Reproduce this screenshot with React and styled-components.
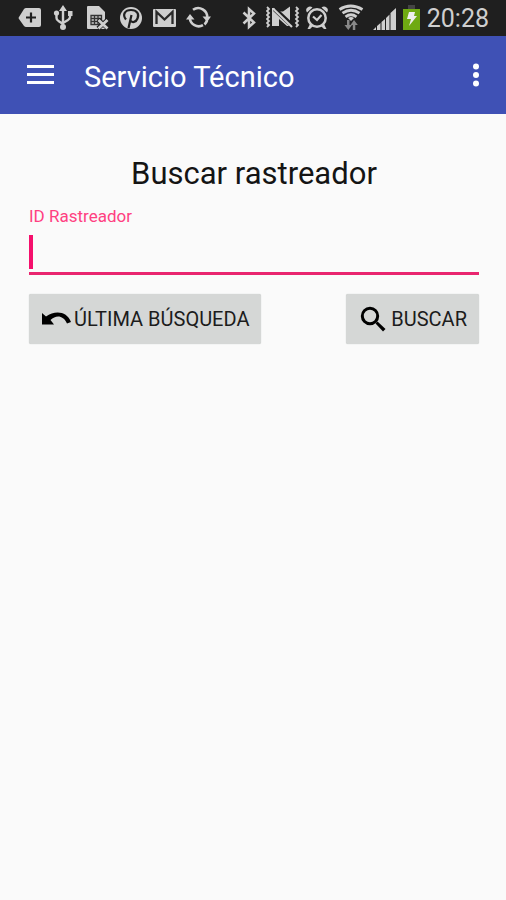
import React from "react";
import styled, { createGlobalStyle } from "styled-components";

const GlobalStyle = createGlobalStyle`
  * { box-sizing: border-box; }
  body {
    margin: 0;
    background: #fafafa;
    color: #141414;
    font-family: Roboto, "Liberation Sans", sans-serif;
  }
`;

const Screen = styled.div`
  min-height: 100vh;
  display: flex;
  flex-direction: column;
`;

const StatusBar = styled.div`
  display: flex;
  justify-content: space-between;
  height: 36px;
  padding: 0 17px 0 12px;
  background: #1f1f1f;
  color: #cfcfcf;
`;

const StatusGroup = styled.div`
  display: flex;
  align-items: center;
`;

const StatusIcon = styled.svg.attrs({ "aria-hidden": true })`
  display: block;
  flex: none;
  width: ${(p) => (p.$narrow ? 20 : 34)}px;
  height: 36px;
  fill: currentColor;
`;

const Clock = styled.time`
  margin-left: 5px;
  font-size: 25px;
  line-height: 36px;
  padding-top: 2px;
`;

const AppBar = styled.header`
  display: flex;
  align-items: center;
  height: 78px;
  padding: 0 10px 0 20px;
  background: #3f51b5;
  color: #fff;
`;

const IconButton = styled.button`
  display: grid;
  place-items: center;
  width: 40px;
  height: 48px;
  padding: 0;
  border: 0;
  background: none;
  color: inherit;
  cursor: pointer;

  svg { fill: currentColor; }
`;

const Title = styled.h1`
  flex: 1;
  margin: 0 0 0 24px;
  padding-top: 3px;
  font-size: 29px;
  line-height: 36px;
  font-weight: 400;
`;

const Content = styled.main`
  display: flex;
  flex-direction: column;
  padding: 40px 27px 40px 29px;
`;

const Heading = styled.h2`
  margin: 0;
  text-align: center;
  font-size: 31px;
  line-height: 40px;
  font-weight: 400;
`;

const Label = styled.label`
  margin-top: 12px;
  font-size: 17px;
  line-height: 20px;
  color: #ff4081;
`;

const FieldBox = styled.div`
  display: flex;
  align-items: flex-end;
  height: 49px;
  padding-bottom: 3px;
  border-bottom: 3px solid #e9256f;
`;

const Caret = styled.span`
  width: 4px;
  height: 34px;
  background: #f50f6c;
`;

const Input = styled.input`
  flex: 1;
  min-width: 0;
  height: 34px;
  padding: 0;
  border: 0;
  outline: 0;
  background: none;
  font: inherit;
  font-size: 26px;
  caret-color: #f50f6c;
`;

const Actions = styled.div`
  display: flex;
  justify-content: space-between;
  margin-top: 19px;
`;

const ActionButton = styled.button`
  display: flex;
  align-items: center;
  gap: ${(p) => p.$gap}px;
  height: 50px;
  padding: 0 12px;
  border: 0;
  border-radius: 2px;
  background: #d5d7d6;
  box-shadow: 0 0 1px #bbbdbc;
  color: #1c1c1c;
  font-family: inherit;
  font-size: 20px;
  line-height: 24px;
  white-space: nowrap;
  cursor: pointer;

  svg { flex: none; fill: #000; }
`;

const zigzag = (x) => `M${x} 7l2 2-2 2 2 2-2 2 2 2-2 2 2 2-2 2 2 2-2 2`;

export default function App() {
  return (
    <>
      <GlobalStyle />
      <Screen>
        <StatusBar>
          <StatusGroup>
            <StatusIcon viewBox="0 0 34 36">
              <path d="M14 8h13q2 0 2 2v15q0 2-2 2H14q-1 0-2-1l-5-7q-1-1 0-2l5-8q1-1 2-1z" />
              <path d="M19 12.500v10M14 17.500h10" stroke="#1f1f1f" strokeWidth="2.200" />
            </StatusIcon>
            <StatusIcon viewBox="0 0 34 36">
              <path d="M17 9v18M10.500 13v5q0 2 2 3l4.500 3M24 13v4q0 2-2 3l-5 3" fill="none" stroke="currentColor" strokeWidth="2.400" />
              <path d="M17 5l4 6h-8zM22 11h4.500v5H22z" />
              <circle cx="10.500" cy="13" r="2.600" />
              <circle cx="17" cy="27" r="3" />
            </StatusIcon>
            <StatusIcon viewBox="0 0 34 36">
              <path d="M8 6h11l6 6v17H8q-1 0-1-1V7q0-1 1-1z" />
              <path d="M11 15.500h10.500v9H11zM14.500 15.500v9M18 15.500v9M11 18.500h10.500M11 21.500h10.500" fill="none" stroke="#333" strokeWidth="1.300" />
              <path d="M18 19.500l10 9M28 19.500l-10 9" stroke="#1f1f1f" strokeWidth="4.500" />
              <path d="M18.500 20l9 8.500M27.500 20l-9 8.500" stroke="currentColor" strokeWidth="2.800" />
            </StatusIcon>
            <StatusIcon viewBox="0 0 34 36">
              <circle cx="17" cy="18" r="11" />
              <path d="M14.500 28l3-13M12 19.500c-4-5-1-9.500 5-9.500s8.500 4 6.500 8.500c-1.500 4-5.500 4.500-7 2" fill="none" stroke="#1f1f1f" strokeWidth="2.200" />
            </StatusIcon>
            <StatusIcon viewBox="0 0 34 36">
              <rect x="5" y="9" width="23" height="18" rx="1" />
              <path d="M8.500 24V12l8 7.500 8-7.500v12" fill="none" stroke="#292929" strokeWidth="2.300" />
            </StatusIcon>
            <StatusIcon viewBox="0 0 34 36">
              <path d="M11 9.800a9 9 0 0 1 14.200 8.200M21 25.200a9 9 0 0 1-13.200-7.200" fill="none" stroke="currentColor" strokeWidth="2.600" />
              <path d="M20.500 16.500H29L25.200 22zM4 19.500h8.500L8 14z" />
              <path d="M25 20.500a9 9 0 0 1-2.500 4" fill="none" stroke="currentColor" strokeWidth="2.600" />
            </StatusIcon>
          </StatusGroup>
          <StatusGroup>
            <StatusIcon viewBox="0 0 34 36">
              <path d="M11.500 12.500L22 22.500 17 27V9l5 4.500-10.500 10" fill="none" stroke="currentColor" strokeWidth="2.500" />
            </StatusIcon>
            <StatusIcon viewBox="0 0 34 36">
              <path d={`${zigzag(1)}${zigzag(30)}`} fill="none" stroke="currentColor" strokeWidth="1.800" />
              <path d="M6 8h2l17 18h-4l-8-7v7H6z" />
              <path d="M12 11.500h5l7-5v16.500z" />
              <path d="M8.500 9l18 17" stroke="#1f1f1f" strokeWidth="4.500" />
              <path d="M7 8.500l19 18.500" stroke="currentColor" strokeWidth="2.200" />
            </StatusIcon>
            <StatusIcon viewBox="0 0 34 36">
              <circle cx="17" cy="18" r="8.700" fill="none" stroke="currentColor" strokeWidth="2.500" />
              <path d="M7 12.500q-2-3 .5-5t5 0zM27 12.500q2-3-.5-5t-5 0zM10 24l3 2-3 3H7.500zM24 24l-3 2 3 3h2.500z" />
              <path d="M13 16.500l4 3.500 4.500-5" fill="none" stroke="currentColor" strokeWidth="2.200" />
            </StatusIcon>
            <StatusIcon viewBox="0 0 34 36">
              <path d="M5.500 9.500q11-7 23 0M8.500 13.200q8.500-6 17 0M11.500 16.800q5.500-4 11 0" fill="none" stroke="currentColor" strokeWidth="2.800" />
              <path d="M14 18q3-2 6 0l-3 3z" />
              <path d="M13 20h2.500v5H18l-3.700 5-3.800-5H13zM18.800 30v-5h-2.300l3.500-5 3.800 5h-2.500v5z" fill="#888" />
            </StatusIcon>
            <StatusIcon viewBox="0 0 34 36">
              <path d="M5 30l3-3v3zM9 30v-4l3.500-3v7zM13.500 30v-8l3.500-3v11zM18 30V18l3.500-3.500V30zM22.500 30V13l5.500-5v22z" />
            </StatusIcon>
            <StatusIcon $narrow viewBox="0 0 20 36">
              <path d="M6 5h7v4H6z" fill="#444" />
              <rect x="1" y="9" width="17" height="21" fill="#6faa12" />
              <path d="M7 12h6l-1 4h3L7 26l2-7H5z" fill="#eee" />
            </StatusIcon>
            <Clock>20:28</Clock>
          </StatusGroup>
        </StatusBar>

        <AppBar>
          <IconButton type="button" aria-label="Abrir menú">
            <svg width="27" height="20" viewBox="0 0 27 20" aria-hidden="true">
              <path d="M0 0h27v3H0zM0 8h27v3H0zM0 16h27v3H0z" />
            </svg>
          </IconButton>
          <Title>Servicio Técnico</Title>
          <IconButton type="button" aria-label="Más opciones">
            <svg width="8" height="24" viewBox="0 0 8 24" aria-hidden="true">
              <circle cx="4" cy="3.500" r="3" />
              <circle cx="4" cy="12" r="3" />
              <circle cx="4" cy="20.500" r="3" />
            </svg>
          </IconButton>
        </AppBar>

        <Content>
          <Heading>Buscar rastreador</Heading>
          <Label htmlFor="tracker-id">ID Rastreador</Label>
          <FieldBox>
            <Caret aria-hidden="true" />
            <Input id="tracker-id" type="text" />
          </FieldBox>
          <Actions>
            <ActionButton type="button" $gap={2}>
              <svg width="31" height="16" viewBox="0 0 31 16" aria-hidden="true">
                <path d="M1 2l4 3.500C14-1 26 0 30 11l-4 1.500C22 4 15 4 9.500 9L13 13.500H1z" />
              </svg>
              ÚLTIMA BÚSQUEDA
            </ActionButton>
            <ActionButton type="button" $gap={3}>
              <svg width="30" height="30" viewBox="0 0 30 30" aria-hidden="true">
                <circle cx="12" cy="12" r="7.700" fill="none" stroke="#000" strokeWidth="3" />
                <path d="M17.500 19.500l2-2 8 7.500-2.500 2.500z" />
              </svg>
              BUSCAR
            </ActionButton>
          </Actions>
        </Content>
      </Screen>
    </>
  );
}
